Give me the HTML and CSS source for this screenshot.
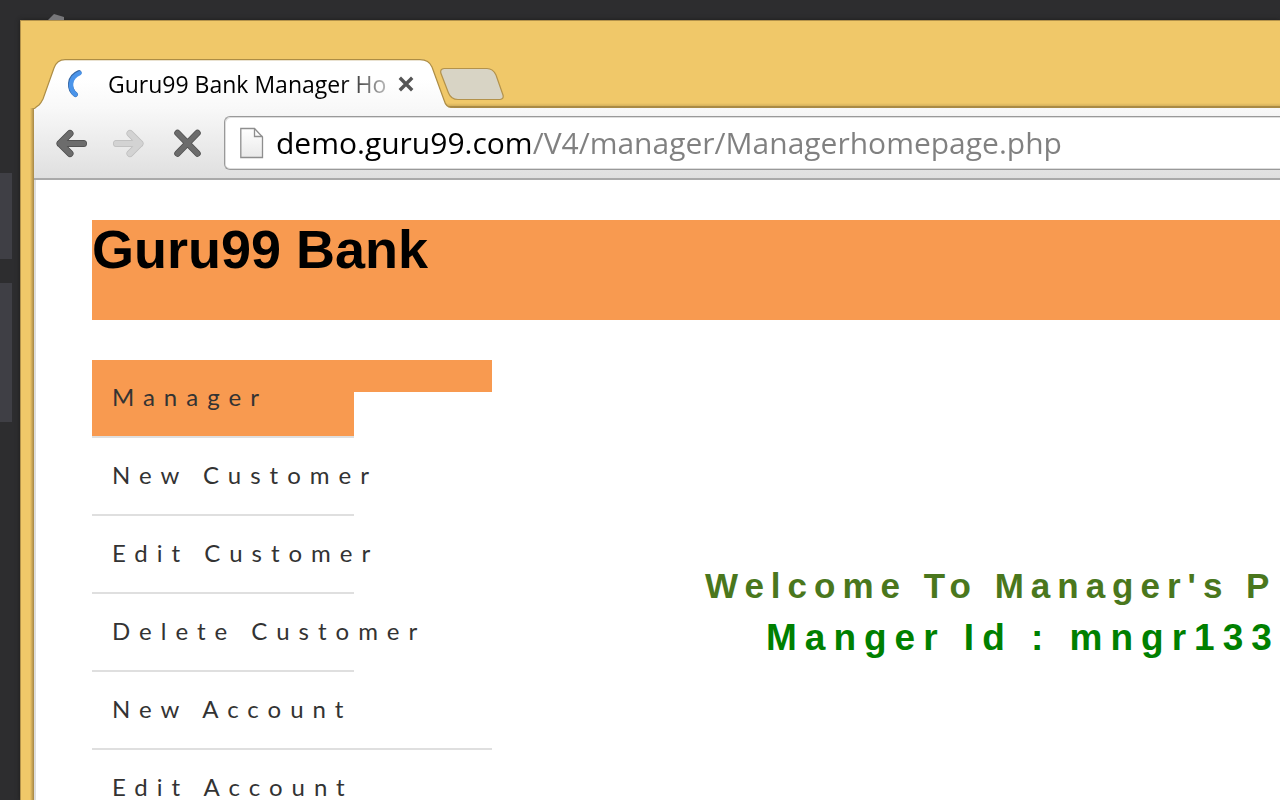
FILE: index.html
```
<!DOCTYPE html>
<html lang="en">
<head>
<meta charset="utf-8">
<title>Guru99 Bank Manager HomePage</title>
<link rel="stylesheet" href="styles.css">
</head>
<body>
<div class="desktop">
  <svg class="desktop-shape" width="16" height="6" viewBox="0 0 16 6" aria-hidden="true"><path d="M0 6 6 0 16 3V6Z" fill="#77777a"/></svg>
  <div class="dock" aria-hidden="true">
    <div class="dock-item dock-item-short"></div>
    <div class="dock-item"></div>
  </div>
  <div class="window">
    <div class="tab-strip">
      <div class="tab">
        <svg class="tab-shape" width="420" height="50" viewBox="0 0 420 50" aria-hidden="true">
          <defs><linearGradient id="tabFill" x1="0" y1="0" x2="0" y2="1"><stop offset="0" stop-color="#fff"/><stop offset=".4" stop-color="#fff"/><stop offset="1" stop-color="#f8f8f8"/></linearGradient></defs>
          <path d="M0 50Q2 48 5 46Q7 44 9 40L20 9Q23 .6 31 .6H386Q395 .6 398 8L410 41Q412 48 417 48.500L420 50Z" fill="url(#tabFill)"/>
          <path d="M0 50Q2 48 5 46Q7 44 9 40L20 9Q23 .6 31 .6H386Q395 .6 398 8L410 41Q412 48 417 48.500H420" fill="none" stroke="#ad8d45" stroke-width="1.200"/>
        </svg>
        <svg class="spinner" width="16" height="30" viewBox="0 0 16 30" aria-hidden="true"><path d="M12 3.500C1 8 1.500 20 8.500 25.500" fill="none" stroke="#3567a5" stroke-width="5" stroke-linecap="round"/><path d="M12.500 4.200C2 8.500 2 20 8.500 25.500" fill="none" stroke="#4a94ea" stroke-width="4.400" stroke-linecap="round"/></svg>
        <span class="tab-title">Guru99 Bank Manager Ho</span>
        <button class="icon-button tab-close" aria-label="Close tab"><svg width="16" height="16" viewBox="0 0 16 16"><path d="M1.800 1.800 14.200 14.200M14.200 1.800 1.800 14.200" stroke="#555" stroke-width="3.400"/></svg></button>
      </div>
      <button class="icon-button new-tab" aria-label="New tab"><svg width="66" height="34" viewBox="0 0 66 34"><path d="M4 1.500H47Q53 1.500 56 8L63 28Q64 32 60 32.500H18Q11 32.500 8.500 26L.8 6Q0 2 4 1.500Z" fill="#d8d4c5" stroke="#b3924b" stroke-width="1.200"/></svg></button>
    </div>
    <div class="toolbar">
      <button class="icon-button nav-button" aria-label="Back"><svg width="34" height="30" viewBox="0 0 34 30"><path d="M28.500 15.500H5M15 5.500 5 15.500 15 25.500" fill="none" stroke="#4b4b4b" stroke-width="7" stroke-linecap="round" stroke-linejoin="round"/><path d="M28.500 15.500H5M15 5.500 5 15.500 15 25.500" fill="none" stroke="#6c6c6c" stroke-width="5.500" stroke-linecap="round" stroke-linejoin="round"/></svg></button>
      <button class="icon-button nav-button" aria-label="Forward"><svg width="34" height="30" viewBox="0 0 34 30"><path d="M3.500 15.500H27M17 5.500 27 15.500 17 25.500" fill="none" stroke="#bdbdbd" stroke-width="7" stroke-linecap="round" stroke-linejoin="round"/><path d="M3.500 15.500H27M17 5.500 27 15.500 17 25.500" fill="none" stroke="#d3d3d3" stroke-width="5.500" stroke-linecap="round" stroke-linejoin="round"/></svg></button>
      <button class="icon-button nav-button" aria-label="Stop loading"><svg width="34" height="30" viewBox="0 0 34 30"><path d="M6.500 5 26.500 25.500M26.500 5 6.500 25.500" stroke="#505050" stroke-width="6.500" stroke-linecap="round"/><path d="M6.500 5 26.500 25.500M26.500 5 6.500 25.500" stroke="#6c6c6c" stroke-width="5" stroke-linecap="round"/></svg></button>
      <div class="address-bar">
        <svg class="page-icon" width="24" height="32" viewBox="0 0 24 32" aria-hidden="true"><defs><linearGradient id="pageFill" x1="0" y1="0" x2="0" y2="1"><stop offset="0" stop-color="#fff"/><stop offset="1" stop-color="#e9e9e9"/></linearGradient></defs><path d="M.8 1.500H14.500L22.500 10V30.500H.8Z" fill="url(#pageFill)" stroke="#8e8e8e" stroke-width="1.300"/><path d="M14.500 1.500V9.500H22.500" fill="none" stroke="#8e8e8e" stroke-width="1.300"/></svg>
        <input class="address" type="text" aria-label="Address" value="demo.guru99.com/V4/manager/Managerhomepage.php">
      </div>
    </div>
    <div class="page">
      <header class="banner"><h1 class="banner-title">Guru99 Bank</h1></header>
      <div class="content">
        <nav class="menu" aria-label="Manager">
          <ul class="menu-list">
            <li class="menu-item menu-item-current"><a class="menu-link" href="#manager">Manager</a></li>
            <li class="menu-item"><a class="menu-link" href="#new-customer">New Customer</a></li>
            <li class="menu-item"><a class="menu-link" href="#edit-customer">Edit Customer</a></li>
            <li class="menu-item"><a class="menu-link" href="#delete-customer">Delete Customer</a></li>
            <li class="menu-item"><a class="menu-link menu-link-wide" href="#new-account">New Account</a></li>
            <li class="menu-item"><a class="menu-link" href="#edit-account">Edit Account</a></li>
          </ul>
        </nav>
        <main class="welcome">
          <p class="welcome-text">Welcome To Manager's P</p>
          <p class="manager-id">Manger Id : mngr133</p>
        </main>
      </div>
    </div>
  </div>
</div>
</body>
</html>
```
FILE: styles.css
```
* { box-sizing: border-box; }
body { margin: 0; overflow: hidden; background: #2d2d2f; font-family: "Liberation Sans", Arial, sans-serif; }
.desktop { position: relative; display: flex; gap: 8px; height: 100vh; padding-top: 20px; overflow: hidden; }
.desktop-shape { position: absolute; left: 48px; top: 14px; }
.dock { flex: none; display: flex; flex-direction: column; gap: 24px; width: 12px; padding-top: 153px; }
.dock-item { height: 139px; background: #3f3f45; }
.dock-item-short { height: 86px; }
.window { flex: 1; min-width: 0; display: flex; flex-direction: column; padding: 38px 0 0 13px; border-top: 1px solid #b3924b; border-left: 1px solid #b3924b; background: linear-gradient(to right, #f0c869 9px, #a58645 13px) 0 87px / 13px 100% no-repeat #f0c869; box-shadow: 0 0 4px #1c1c1c; }
.icon-button { display: flex; flex: none; padding: 0; border: 0; background: none; }
.tab-strip { display: flex; align-items: flex-start; height: 49px; background: linear-gradient(to bottom, #f0c869 44px, #d4b05b 47px, #a98a45 47px) 410px 0 no-repeat; }
.tab { position: relative; flex: none; display: flex; align-items: center; width: 406px; height: 49px; padding-left: 33px; }
.tab-shape { position: absolute; left: 0; top: 0; }
.spinner { position: relative; flex: none; margin-right: 25px; }
.tab-title { position: relative; flex: none; width: 280px; overflow: hidden; white-space: nowrap; font: 23px/32px "Open Sans", "Noto Sans", sans-serif; color: #000; -webkit-mask-image: linear-gradient(to right, #000 232px, rgba(0,0,0,.3) 276px); mask-image: linear-gradient(to right, #000 232px, rgba(0,0,0,.3) 276px); }
.tab-close { position: relative; margin-left: 10px; }
.new-tab { margin-top: 8px; }
.toolbar { flex: none; display: flex; align-items: center; height: 72px; padding-left: 21px; border-bottom: 2px solid #a9a9a9; background: linear-gradient(#f8f8f8, #dfdfdf); }
.nav-button { margin-right: 24px; }
.address-bar { flex: 1; min-width: 0; display: flex; align-items: center; gap: 12px; height: 54px; margin-left: -5px; padding-left: 15px; border: 1px solid #999; border-right: 0; border-radius: 6px 0 0 6px; background: #fff; box-shadow: inset 1px 1px 0 #ddd, inset 0 -1px 0 #ddd; }
.page-icon { flex: none; }
.address { flex: 1; min-width: 0; padding: 0; border: 0; outline: 0; font: 30px/46px "Open Sans", "Noto Sans", sans-serif; color: #000; background: linear-gradient(to right, #000 257px, #808080 257px); -webkit-background-clip: text; background-clip: text; -webkit-text-fill-color: transparent; }
.page { flex: 1; min-height: 0; overflow: hidden; padding: 40px 0 0 56px; border-left: 2px solid #dedede; background: #fff; }
.banner { height: 100px; background: #f89a50; }
.banner-title { margin: 0; font-size: 54px; line-height: 58px; color: #000; }
.content { display: flex; padding-top: 40px; }
.menu { flex: none; width: 400px; }
.menu-list { margin: 0; padding: 0; list-style: none; }
.menu-item-current { background: linear-gradient(#f89a50, #f89a50) no-repeat 0 0 / 100% 32px; }
.menu-link { display: block; width: 262px; height: 78px; padding-left: 20px; border-bottom: 2px solid #dfdfdf; font: 24px/74px Lato, "Open Sans", sans-serif; letter-spacing: 9px; white-space: nowrap; text-decoration: none; color: #333; }
.menu-link-wide { width: 400px; }
.menu-item-current .menu-link { background: #f89a50; }
.welcome { flex: 1; min-width: 0; padding: 200px 0 0 213px; overflow: hidden; font-weight: bold; white-space: nowrap; }
.welcome-text { margin: 0; font-size: 35px; letter-spacing: 7px; line-height: 52px; color: #4a771d; }
.manager-id { margin: 0; padding-left: 61px; font-size: 37px; letter-spacing: 8px; line-height: 52px; color: #008000; }
```
